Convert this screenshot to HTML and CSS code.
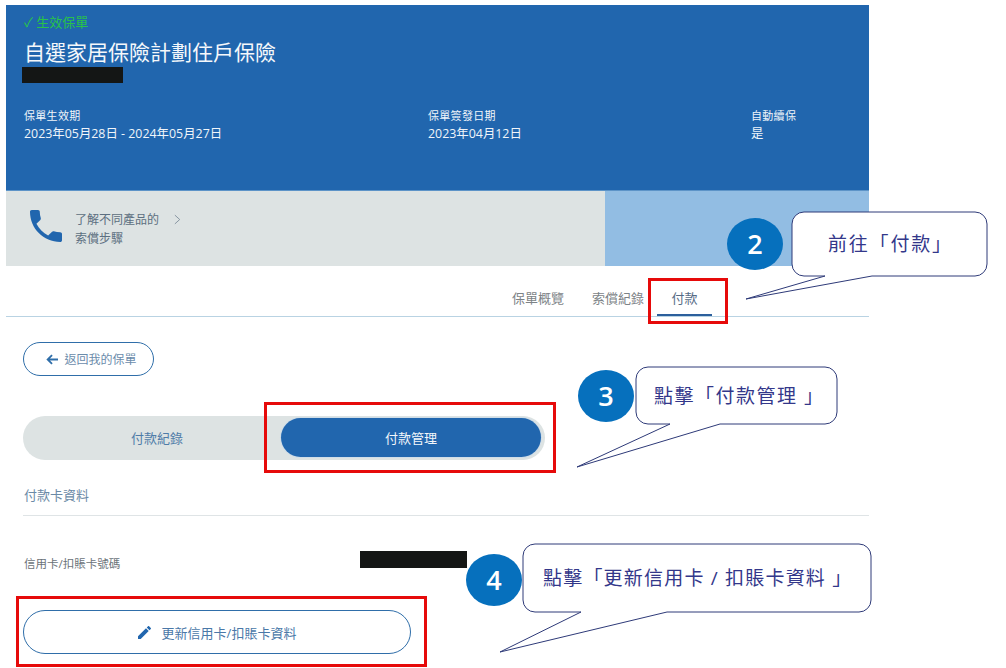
FILE: index.html
```html
<!DOCTYPE html>
<html lang="zh-Hant">
<head>
<meta charset="utf-8">
<title>自選家居保險計劃住戶保險</title>
<link rel="stylesheet" href="styles.css">
</head>
<body>
<main class="page">
  <header class="hero">
    <div class="status">✓ 生效保單</div>
    <h1 class="title">自選家居保險計劃住戶保險</h1>
    <div class="redact redact-policy"></div>
    <div class="facts">
      <div class="fact"><div class="fact-label">保單生效期</div><div class="fact-value">2023年05月28日 - 2024年05月27日</div></div>
      <div class="fact"><div class="fact-label">保單簽發日期</div><div class="fact-value">2023年04月12日</div></div>
      <div class="fact"><div class="fact-label">自動續保</div><div class="fact-value">是</div></div>
    </div>
  </header>
  <section class="band">
    <div class="band-left">
      <svg class="phone" viewBox="3 3 18 18"><path d="M6.62 10.79c1.44 2.83 3.76 5.14 6.59 6.59l2.2-2.2c.27-.27.67-.36 1.02-.24 1.12.37 2.33.57 3.57.57.55 0 1 .45 1 1V20c0 .55-.45 1-1 1-9.39 0-17-7.61-17-17 0-.55.45-1 1-1h3.5c.55 0 1 .45 1 1 0 1.25.2 2.45.57 3.57.11.35.03.74-.25 1.02l-2.2 2.2z"/></svg>
      <div class="claim">
        <div class="claim-line">了解不同產品的<svg class="chev" viewBox="0 0 8 12"><path d="M1 1l5.500 5L1 11"/></svg></div>
        <div class="claim-line">索償步驟</div>
      </div>
    </div>
    <div class="band-right"></div>
  </section>
  <nav class="tabs">
    <a class="tab">保單概覽</a>
    <a class="tab">索償紀錄</a>
    <a class="tab tab-active">付款</a>
  </nav>
  <div class="content">
    <button class="back">
      <svg class="back-arrow" viewBox="0 0 14 12"><path d="M13 6H2M6.500 1.200L1.700 6l4.800 4.800"/></svg>返回我的保單
    </button>
    <div class="toggle">
      <div class="toggle-item">付款紀錄</div>
      <div class="toggle-item toggle-active">付款管理</div>
    </div>
    <div class="section-title">付款卡資料</div>
    <div class="card-row">
      <div class="card-label">信用卡/扣賬卡號碼</div>
      <div class="redact redact-card"></div>
    </div>
    <button class="update">
      <svg class="pencil" viewBox="3 3 18 18"><path d="M3 17.250V21h3.750L17.810 9.940l-3.750-3.750L3 17.250zM20.710 7.040c.39-.39.39-1.020 0-1.410l-2.340-2.340c-.39-.39-1.020-.39-1.410 0l-1.830 1.830 3.750 3.750 1.830-1.830z"/></svg>更新信用卡/扣賬卡資料
    </button>
  </div>
</main>

<div class="mark mark-2"></div>
<div class="mark mark-3"></div>
<div class="mark mark-4"></div>

<svg class="callouts" viewBox="0 0 1006 668">
  <path d="M804 212H975a12 12 0 0 1 12 12V264a12 12 0 0 1-12 12H872L746 299L825 276H804a12 12 0 0 1-12-12V224a12 12 0 0 1 12-12z"/>
  <path d="M648 367H825a12 12 0 0 1 12 12V412a12 12 0 0 1-12 12H720L577 467L670 424H648a12 12 0 0 1-12-12V379a12 12 0 0 1 12-12z"/>
  <path d="M535 544H859a12 12 0 0 1 12 12V600a12 12 0 0 1-12 12H667L500 652L581 612H535a12 12 0 0 1-12-12V556a12 12 0 0 1 12-12z"/>
</svg>

<div class="badge badge-2">2</div>
<div class="badge badge-3">3</div>
<div class="badge badge-4">4</div>

<div class="note note-2">前往「付款」</div>
<div class="note note-3">點擊「付款管理 」</div>
<div class="note note-4">點擊「更新信用卡 / 扣賬卡資料 」</div>
</body>
</html>
```
FILE: styles.css
```css
* { box-sizing: border-box; }
body {
  margin: 0;
  background: #fff;
  font-family: "Open Sans", "Noto Sans CJK TC", sans-serif;
  position: relative;
  height: 668px;
  overflow: hidden;
}
.page { width: 863px; margin: 5px 0 0 6px; }

.hero {
  height: 186px;
  background: #2166ae;
  border-bottom: 1px solid #5d94c8;
  padding: 9px 18px 0;
  color: #f0f5fa;
}
.status { font-size: 13px; line-height: 16px; color: #28c24a; }
.title { margin: 6px 0 0; font-size: 21px; font-weight: 400; line-height: 32px; color: #f5f8fb; }
.redact { background: #141615; }
.redact-policy { width: 101px; height: 16px; margin: -1px 0 0 -2px; }
.facts { display: grid; grid-template-columns: 404px 323px 1fr; margin-top: 26px; }
.fact-label { font-size: 11px; line-height: 14px; letter-spacing: .3px; }
.fact-value { font-size: 12.400px; line-height: 16px; margin-top: 3px; }

.band { display: flex; height: 75px; }
.band-left { width: 599px; background: #dde3e3; display: flex; padding: 19px 0 0 24px; }
.band-right { flex: 1; background: #92bde3; }
.phone { width: 32px; height: 32px; fill: #2166ae; }
.claim { margin-left: 13px; }
.claim-line { font-size: 12px; line-height: 19px; color: #5c6f80; display: flex; align-items: center; }
.chev { width: 7px; height: 11px; margin-left: 15px; fill: none; stroke: #7c8c99; stroke-width: 1; }

.tabs {
  height: 51px;
  display: flex;
  justify-content: flex-end;
  border-bottom: 1px solid #b9d3e3;
  padding-right: 157px;
}
.tab { font-size: 13px; line-height: 16px; color: #7d8387; padding-top: 24px; margin-left: 28px; white-space: nowrap; }
.tab-active {
  color: #566b85;
  width: 55px;
  margin-left: 13px;
  text-align: center;
  border-bottom: 2px solid #2c5f9c;
  height: 50px;
}

.content { padding: 25px 0 0 17px; }
.back {
  display: flex;
  align-items: center;
  justify-content: center;
  width: 131px;
  height: 34px;
  padding: 0 0 0 6px;
  background: #fff;
  border: 1px solid #2f6ea9;
  border-radius: 17px;
  font: inherit;
  font-size: 12px;
  color: #6b8cab;
}
.back-arrow { width: 13px; height: 11px; margin-right: 5px; fill: none; stroke: #2f6ea9; stroke-width: 2; }
.toggle {
  margin-top: 40px;
  width: 522px;
  height: 44px;
  background: #dde3e3;
  border-radius: 22px;
  display: flex;
  padding: 2px 4px 3px 0;
  align-items: stretch;
}
.toggle-item { flex: 0 0 258px; display: flex; align-items: center; justify-content: center; font-size: 13px; color: #4f7ca8; padding-left: 10px; }
.toggle-active { flex: 0 0 260px; padding-left: 0; background: #2166ae; color: #f3f7fb; border-radius: 20px; box-shadow: 0 0 0 1px #cfdde8; }
.section-title {
  margin-top: 27px;
  height: 29px;
  border-bottom: 1px solid #dfe4e6;
  font-size: 13px;
  line-height: 16px;
  color: #6b8aa6;
  padding-left: 1px;
}
.card-row { display: flex; align-items: center; height: 17px; margin-top: 35px; }
.card-label { width: 337px; padding-left: 1px; font-size: 11.500px; line-height: 24px; color: #6b7379; padding-top: 8px; white-space: nowrap; }
.redact-card { width: 107px; height: 17px; }
.update {
  display: flex;
  align-items: center;
  justify-content: center;
  width: 388px;
  height: 44px;
  margin-top: 42px;
  padding: 0;
  background: #fff;
  border: 1px solid #2f6ea9;
  border-radius: 22px;
  font: inherit;
  font-size: 13px;
  color: #4a78a8;
}
.pencil { width: 13px; height: 13px; margin-right: 11px; fill: #2166ae; }

.mark { position: absolute; border: 3px solid #e60a0a; }
.mark-2 { left: 648px; top: 278px; width: 80px; height: 46px; }
.mark-3 { left: 264px; top: 402px; width: 292px; height: 71px; }
.mark-4 { left: 16px; top: 596px; width: 411px; height: 71px; }

.callouts { position: absolute; left: 0; top: 0; width: 1006px; height: 668px; }
.callouts path { fill: #fff; stroke: #2e3a78; stroke-width: 1; }

.badge {
  position: absolute;
  width: 56px;
  height: 52px;
  border-radius: 50%;
  background: #0670bd;
  color: #fff;
  font-size: 27px;
  font-weight: 600;
  line-height: 52px;
  text-align: center;
}
.badge-2 { left: 727px; top: 218px; }
.badge-3 { left: 578px; top: 370px; }
.badge-4 { left: 466px; top: 554px; }

.note { position: absolute; font-size: 19px; line-height: 24px; color: #33378a; white-space: nowrap; letter-spacing: 1.500px; }
.note-2 { left: 828px; top: 232px; letter-spacing: 1.800px; }
.note-3 { left: 654px; top: 384px; }
.note-4 { left: 543px; top: 566px; letter-spacing: 1.200px; }
```
